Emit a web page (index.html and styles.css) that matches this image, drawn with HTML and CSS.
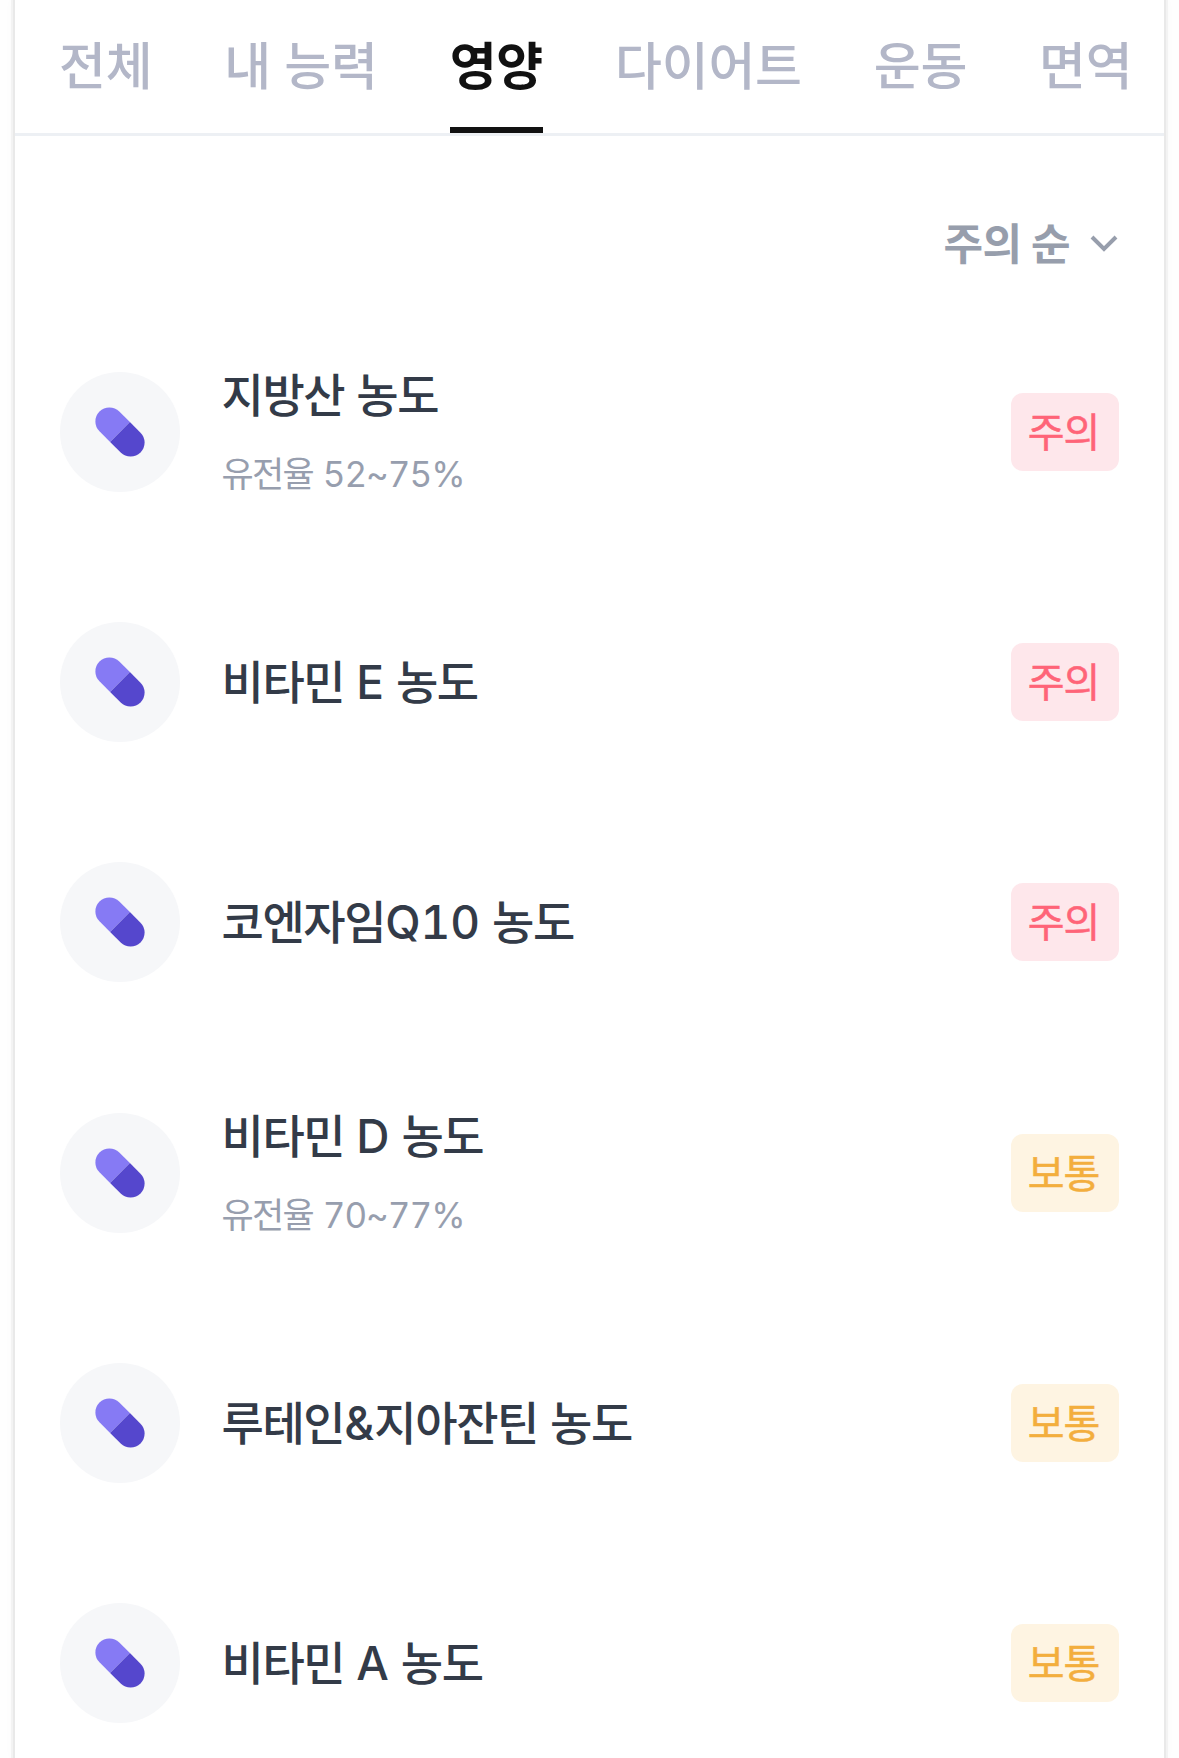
FILE: index.html
```
<!DOCTYPE html>
<html lang="ko">
<head>
  <meta charset="UTF-8">
  <meta name="viewport" content="width=device-width, initial-scale=1.0">
  <title>영양</title>
  <link rel="stylesheet" href="styles.css">
</head>
<body>
  <svg class="symbols">
    <symbol id="pill" viewBox="0 0 60 60">
      <g transform="rotate(45 30 30)">
        <path d="M30 16H15a14 14 0 0 0 0 28h15z" fill="#867af4"/>
        <path d="M30 16h15a14 14 0 0 1 0 28H30z" fill="#5547cd"/>
      </g>
    </symbol>
  </svg>

  <div class="container">
    <nav class="tabs">
      <a class="tab">전체</a>
      <a class="tab">내 능력</a>
      <a class="tab active">영양</a>
      <a class="tab">다이어트</a>
      <a class="tab">운동</a>
      <a class="tab">면역</a>
    </nav>

    <div class="sort">
      <span>주의 순</span>
      <svg class="chevron" viewBox="0 0 28 18"><path d="M2 2l12 12L26 2"/></svg>
    </div>

    <ul class="list">
      <li class="item has-sub">
        <div class="icon"><svg><use href="#pill"/></svg></div>
        <div class="text">
          <p class="title">지방산 농도</p>
          <p class="sub">유전율 <span class="num">52~75%</span></p>
        </div>
        <span class="badge warn">주의</span>
      </li>
      <li class="item">
        <div class="icon"><svg><use href="#pill"/></svg></div>
        <div class="text">
          <p class="title">비타민 <span class="num">E</span> 농도</p>
        </div>
        <span class="badge warn">주의</span>
      </li>
      <li class="item">
        <div class="icon"><svg><use href="#pill"/></svg></div>
        <div class="text">
          <p class="title">코엔자임<span class="num">Q10</span> 농도</p>
        </div>
        <span class="badge warn">주의</span>
      </li>
      <li class="item has-sub">
        <div class="icon"><svg><use href="#pill"/></svg></div>
        <div class="text">
          <p class="title">비타민 <span class="num">D</span> 농도</p>
          <p class="sub">유전율 <span class="num">70~77%</span></p>
        </div>
        <span class="badge normal">보통</span>
      </li>
      <li class="item">
        <div class="icon"><svg><use href="#pill"/></svg></div>
        <div class="text">
          <p class="title">루테인<span class="num">&amp;</span>지아잔틴 농도</p>
        </div>
        <span class="badge normal">보통</span>
      </li>
      <li class="item">
        <div class="icon"><svg><use href="#pill"/></svg></div>
        <div class="text">
          <p class="title">비타민 <span class="num">A</span> 농도</p>
        </div>
        <span class="badge normal">보통</span>
      </li>
    </ul>
  </div>
</body>
</html>
```
FILE: styles.css
```
* {
  margin: 0;
  padding: 0;
  box-sizing: border-box;
}

body {
  background: #fefefe;
  font-family: Inter, "Noto Sans CJK KR", sans-serif;
  overflow: hidden;
}

.symbols {
  display: none;
}

.container {
  height: 1758px;
  margin: 0 15px;
  background: #fff;
  box-shadow: 0 0 0 2px #e9e9e9, 0 0 0 4px #f3f3f3, 0 0 12px rgba(0, 0, 0, 0.04);
}

.tabs {
  display: flex;
  gap: 72px;
  height: 136px;
  padding-left: 44px;
  border-bottom: 3px solid #edf0f4;
  overflow: hidden;
}

.tab {
  flex: none;
  height: 133px;
  line-height: 134px;
  font-size: 51px;
  font-weight: 500;
  letter-spacing: -0.25px;
  color: #b3b7c8;
  white-space: nowrap;
}

.tab.active {
  font-weight: 700;
  color: #111;
  border-bottom: 6px solid #111;
}

.sort {
  display: flex;
  justify-content: flex-end;
  align-items: center;
  gap: 20px;
  height: 165px;
  padding: 50px 46px 0 0;
  line-height: 60px;
  font-size: 43px;
  font-weight: 700;
  letter-spacing: -0.6px;
  color: #979eac;
}

.chevron {
  width: 28px;
  height: 18px;
  fill: none;
  stroke: #979eac;
  stroke-width: 4;
}

.list {
  list-style: none;
}

.item {
  display: flex;
  align-items: center;
  height: 240px;
  padding: 0 45px;
}

.item.has-sub {
  height: 261px;
}

.icon {
  width: 120px;
  height: 120px;
  display: flex;
  align-items: center;
  justify-content: center;
  border-radius: 50%;
  background: #f6f7f9;
}

.icon svg {
  width: 60px;
  height: 60px;
}

.text {
  flex: 1;
  margin-left: 41.5px;
  font-variant-numeric: tabular-nums;
}

.title {
  line-height: 66px;
  font-size: 46px;
  font-weight: 500;
  letter-spacing: -1.4px;
  word-spacing: 1px;
  color: #333b48;
}

.sub {
  margin-top: 19px;
  line-height: 54px;
  font-size: 35px;
  letter-spacing: -1.7px;
  word-spacing: 2px;
  color: #979eae;
}

.num {
  letter-spacing: 0;
}

.sub .num {
  letter-spacing: -1px;
}

.badge {
  width: 108px;
  height: 78px;
  padding-right: 3px;
  border-radius: 12px;
  line-height: 79px;
  text-align: center;
  font-size: 40px;
  font-weight: 400;
  letter-spacing: -1px;
  -webkit-text-stroke: 0.5px currentColor;
}

.badge.warn {
  background: #fee7eb;
  color: #ff6478;
}

.badge.normal {
  background: #fef4e2;
  color: #f3ae3d;
}
```
